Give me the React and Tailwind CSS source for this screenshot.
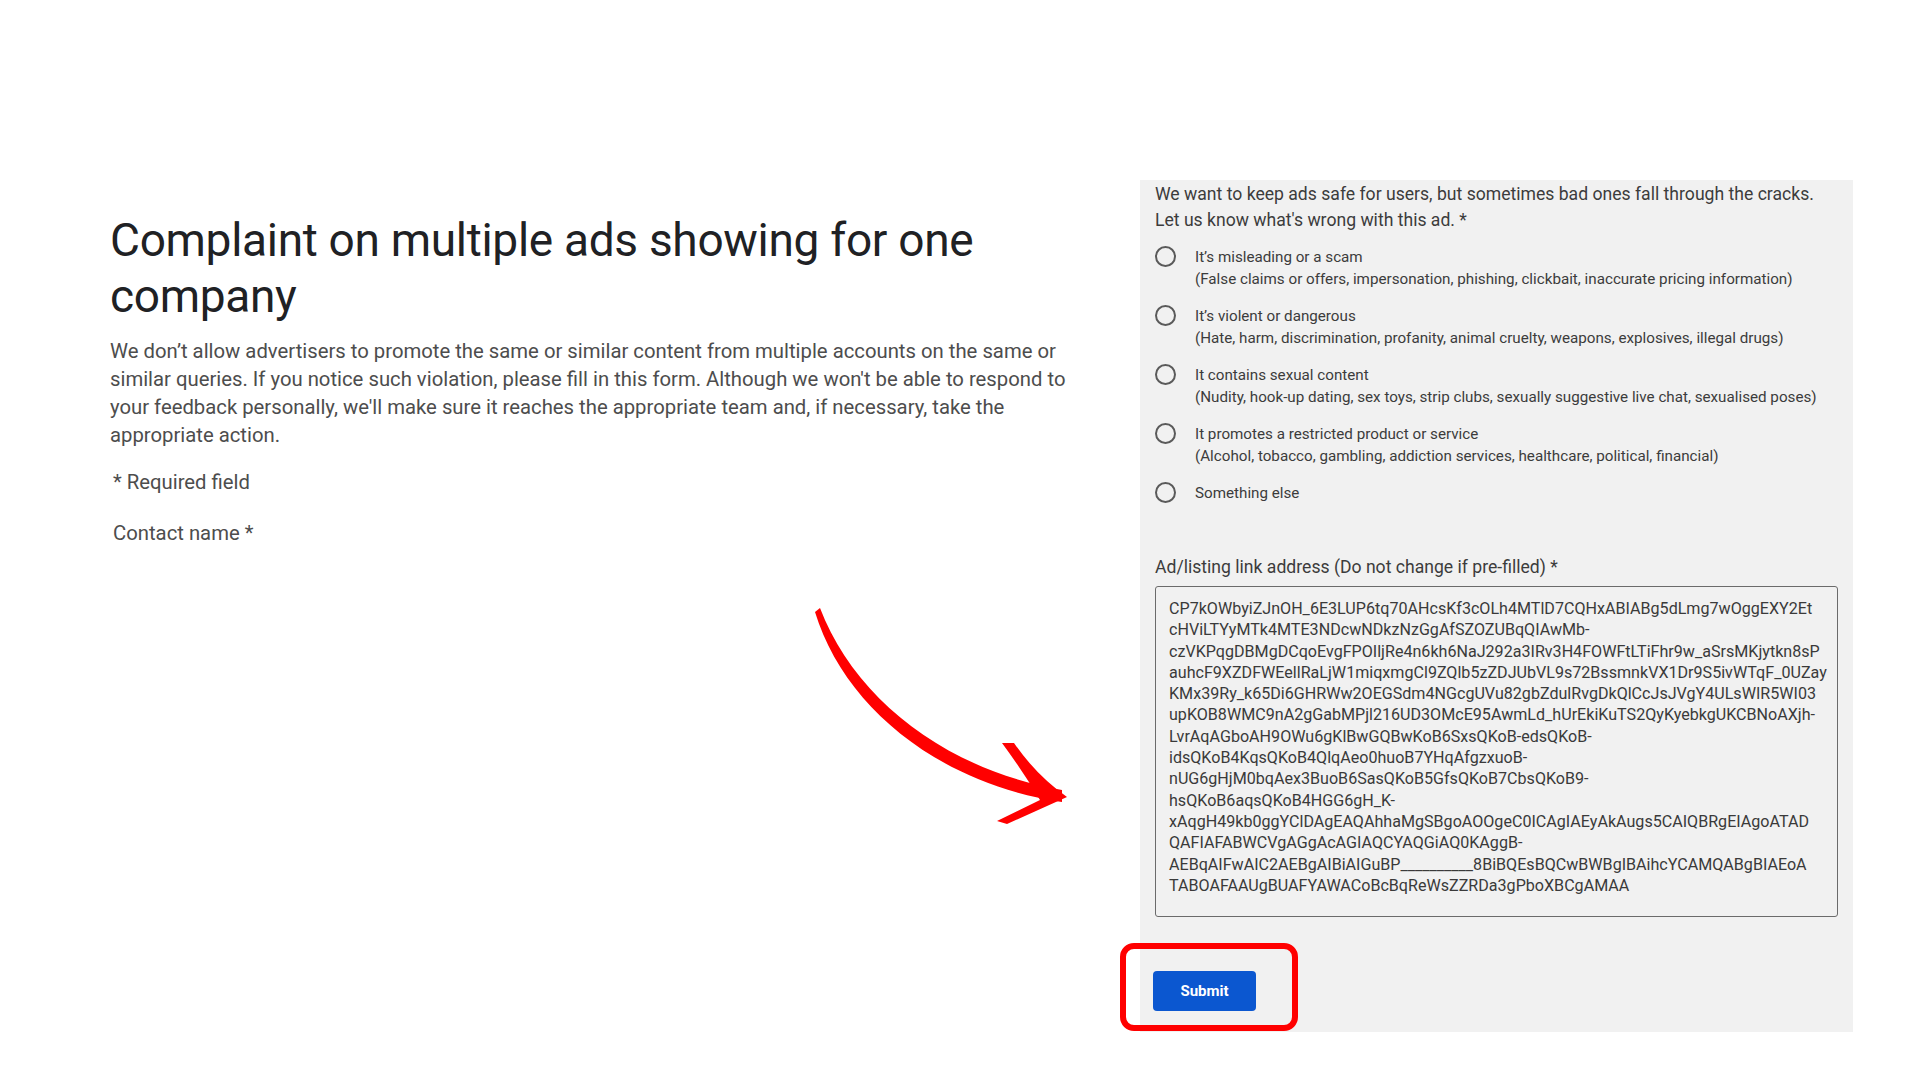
import React from 'react';

const options = [
    { label: 'It\u2019s misleading or a scam', hint: '(False claims or offers, impersonation, phishing, clickbait, inaccurate pricing information)' },
    { label: 'It\u2019s violent or dangerous', hint: '(Hate, harm, discrimination, profanity, animal cruelty, weapons, explosives, illegal drugs)' },
    { label: 'It contains sexual content', hint: '(Nudity, hook-up dating, sex toys, strip clubs, sexually suggestive live chat, sexualised poses)' },
    { label: 'It promotes a restricted product or service', hint: '(Alcohol, tobacco, gambling, addiction services, healthcare, political, financial)' },
    { label: 'Something else' },
];

const linkLines = [
    'CP7kOWbyiZJnOH_6E3LUP6tq70AHcsKf3cOLh4MTlD7CQHxABIABg5dLmg7wOggEXY2Et',
    'cHViLTYyMTk4MTE3NDcwNDkzNzGgAfSZOZUBqQIAwMb-',
    'czVKPqgDBMgDCqoEvgFPOIljRe4n6kh6NaJ292a3IRv3H4FOWFtLTiFhr9w_aSrsMKjytkn8sP',
    'auhcF9XZDFWEellRaLjW1miqxmgCl9ZQlb5zZDJUbVL9s72BssmnkVX1Dr9S5ivWTqF_0UZay',
    'KMx39Ry_k65Di6GHRWw2OEGSdm4NGcgUVu82gbZdulRvgDkQlCcJsJVgY4ULsWIR5WI03',
    'upKOB8WMC9nA2gGabMPjl216UD3OMcE95AwmLd_hUrEkiKuTS2QyKyebkgUKCBNoAXjh-',
    'LvrAqAGboAH9OWu6gKlBwGQBwKoB6SxsQKoB-edsQKoB-',
    'idsQKoB4KqsQKoB4QlqAeo0huoB7YHqAfgzxuoB-',
    'nUG6gHjM0bqAex3BuoB6SasQKoB5GfsQKoB7CbsQKoB9-',
    'hsQKoB6aqsQKoB4HGG6gH_K-',
    'xAqgH49kb0ggYClDAgEAQAhhaMgSBgoAOOgeC0ICAgIAEyAkAugs5CAIQBRgEIAgoATAD',
    'QAFIAFABWCVgAGgAcAGIAQCYAQGiAQ0KAggB-',
    'AEBqAIFwAIC2AEBgAIBiAIGuBP__________8BiBQEsBQCwBWBgIBAihcYCAMQABgBIAEoA',
    'TABOAFAAUgBUAFYAWACoBcBqReWsZZRDa3gPboXBCgAMAA',
];

const Radio = () => (
    <span className="h-[21px] w-[21px] shrink-0 rounded-full border-2 border-[#5a5a5a]"></span>
);

const App = () => {
    return (
        <div className="relative h-[1080px] w-[1920px] overflow-hidden bg-white font-['Roboto',sans-serif]">
            <div className="flex">
                {/* Left intro column */}
                <div className="w-[1110px] shrink-0 pl-[110px] pt-[212px]">
                    <h1 className="text-[46px] leading-[56px] font-normal text-[#202124] tracking-[-0.3px]">
                        Complaint on multiple ads showing for one<br />company
                    </h1>
                    <p className="mt-[13px] whitespace-nowrap text-[20.3px] leading-[28px] text-[#4d4d4d]">
                        We don’t allow advertisers to promote the same or similar content from multiple accounts on the same or<br />
                        similar queries. If you notice such violation, please fill in this form. Although we won't be able to respond to<br />
                        your feedback personally, we'll make sure it reaches the appropriate team and, if necessary, take the<br />
                        appropriate action.
                    </p>
                    <p className="mt-[19px] pl-[3px] text-[20.3px] leading-[28px] text-[#4d4d4d]">* Required field</p>
                    <p className="mt-[23px] pl-[3px] text-[20.3px] leading-[28px] text-[#4d4d4d]">Contact name *</p>
                </div>

                {/* Right form panel */}
                <div className="ml-[30px] mt-[180px] h-[852px] w-[713px] shrink-0 bg-[#f1f1f1] px-[15px]">
                    <p className="pt-[1px] text-[17.6px] leading-[26px] text-[#3c3c3c]">
                        We want to keep ads safe for users, but sometimes bad ones fall through the cracks.<br />
                        Let us know what's wrong with this ad. *
                    </p>
                    <div className="mt-[13px] flex flex-col gap-[15px]">
                        {options.map((o) => (
                            <div key={o.label} className="flex items-start gap-[19px]">
                                <Radio />
                                <div className="text-[15.2px] leading-[22px] text-[#3c3c3c]">
                                    <div>{o.label}</div>
                                    {o.hint && <div>{o.hint}</div>}
                                </div>
                            </div>
                        ))}
                    </div>

                    <p className="mt-[50px] text-[17.6px] leading-[26px] text-[#3c3c3c]">
                        Ad/listing link address (Do not change if pre-filled) *
                    </p>
                    <div className="mt-[6px] h-[331px] w-[683px] rounded-[3px] border border-[#6b6b6b] px-[13px] pt-[11px] text-[16.1px] leading-[21.3px] text-[#3a3a3a]">
                        {linkLines.map((l, i) => (
                            <div key={i} className="whitespace-nowrap">{l}</div>
                        ))}
                    </div>

                    <div className="mt-[54px]">
                        <button className="-ml-[2px] h-[40px] w-[103px] rounded-[4px] bg-[#0b57d0] text-[15px] font-bold text-white">
                            Submit
                        </button>
                    </div>
                </div>
            </div>

            {/* Annotation: red highlight around submit */}
            <div className="absolute left-[1120px] top-[943px] h-[88px] w-[178px] rounded-[14px] border-[6px] border-[#ff0000]"></div>

            {/* Annotation: red curved arrow */}
            <svg className="absolute left-[800px] top-[590px]" width="300" height="250" viewBox="0 0 300 250">
                <path d="M20 18 C 54 107, 143 179, 262 200 L 262 212 C 135 193, 43 114, 15 22 Z" fill="#ff0000" />
                <path d="M202 153 L 214 153 Q 236 185 267 207 L 207 234 L 197 231 L 240 210 Q 222 180 202 153 Z" fill="#ff0000" />
            </svg>
        </div>
    );
};

export default App;
